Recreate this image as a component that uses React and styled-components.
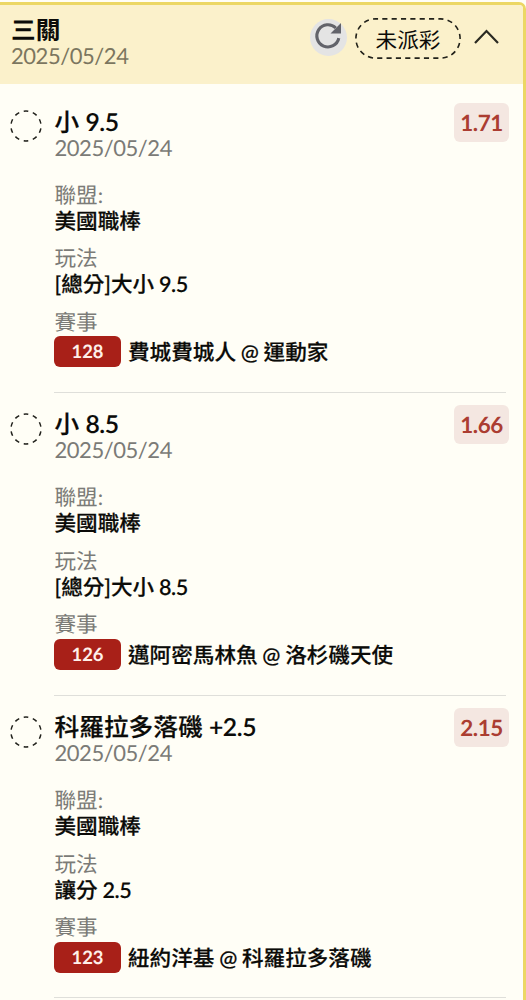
import React from "react";
import styled, { createGlobalStyle } from "styled-components";

const GlobalStyle = createGlobalStyle`
  * { box-sizing: border-box; }
  body { margin: 0; background: #fffef6; overflow: hidden; }
`;

const Page = styled.main`
  width: 526px;
  height: 1000px;
  overflow: hidden;
  padding-top: 2px;
  background: #fffef6;
  color: #0b0b08;
  font-family: Lato, "Noto Sans CJK TC", sans-serif;
  font-size: 21.6px;
  text-rendering: geometricPrecision;
`;

const Ticket = styled.section`
  height: 1010px;
  border: 3px solid #ecd764;
  border-left: 0;
  border-top-right-radius: 7px;
  overflow: hidden;
`;

const Header = styled.header`
  display: flex;
  align-items: flex-start;
  height: 79px;
  padding: 11px 24px 0 11px;
  background: #fbf1cb;
`;

const Heading = styled.div`
  flex: 1;
`;

const Title = styled.h2`
  margin: 0;
  padding-top: 1px;
  font-size: 24.7px;
  line-height: 28px;
  font-weight: ${(p) => p.$weight || 600};
  -webkit-text-stroke: ${(p) => (p.$weight ? "0.2px" : "0")};
  white-space: nowrap;
`;

const DateText = styled.div`
  font-size: 22px;
  letter-spacing: -0.45px;
  line-height: 22px;
  color: ${(p) => p.$color || "#7b7b77"};
`;

const Num = styled.span`
  font-weight: 600;
  letter-spacing: -0.4px;
  -webkit-text-stroke: 0.1px;
`;

const RefreshButton = styled.button`
  width: 37px;
  height: 37px;
  margin: 3px 8px 0 0;
  padding: 0;
  border: 0;
  border-radius: 50%;
  background: #e4e4e4;
`;

const Status = styled.div`
  display: grid;
  width: 106px;
  height: 41px;
  margin: 2px 13px 0 0;
  place-items: center;
  > * { grid-area: 1 / 1; }
`;

const StatusText = styled.span`
  padding-top: 2px;
`;

const Toggle = styled.button`
  width: 25px;
  height: 16px;
  margin-top: 13px;
  padding: 0;
  border: 0;
  background: none;
`;

const Icon = styled.svg`
  display: block;
  overflow: visible;
`;

const List = styled.div`
  padding: 6px 17px 0 10px;
`;

const Bet = styled.article`
  display: flex;
  height: 302.8px;
`;

const Mark = styled.div`
  width: 32px;
  padding-top: 20px;
  margin-right: 12px;
`;

const Body = styled.div`
  flex: 1;
  padding-top: 17.5px;
  padding-left: 0.5px;
  border-bottom: 1.5px solid #dfdfda;
`;

const Top = styled.div`
  display: flex;
  justify-content: space-between;
  height: 52px;
  margin-bottom: 22px;
`;

const Odds = styled.div`
  width: 55px;
  height: 39px;
  margin: -5px -3px 0 0;
  border-radius: 6px;
  background: #f4e7e1;
  color: #ab3d31;
  font-size: 22.4px;
  letter-spacing: -0.4px;
  line-height: 40px;
  font-weight: 700;
  text-align: center;
`;

const Field = styled.div`
  margin-bottom: 10.5px;
  line-height: 26px;
`;

const Label = styled.div`
  color: #7b7b77;
`;

const Value = styled.div`
  line-height: 27px;
  font-weight: 500;
  word-spacing: -0.7px;
  -webkit-text-stroke: 0.2px;
  white-space: nowrap;
`;

const Match = styled(Value)`
  display: flex;
  align-items: flex-start;
  gap: 7px;
  margin-top: 1.5px;
  line-height: 33px;
`;

const Code = styled.span`
  width: 67px;
  height: 31px;
  margin-left: -0.5px;
  border-radius: 6px;
  background: #a82018;
  color: #fff0ea;
  font-size: 18.4px;
  line-height: 31px;
  font-weight: 700;
  text-align: center;
  -webkit-text-stroke: 0;
`;

const bets = [
  { pick: "小", line: "9.5", odds: "1.71", play: "[總分]大小", total: "9.5", code: "128", match: "費城費城人 @ 運動家" },
  { pick: "小", line: "8.5", odds: "1.66", play: "[總分]大小", total: "8.5", code: "126", match: "邁阿密馬林魚 @ 洛杉磯天使" },
  { pick: "科羅拉多落磯", line: "+2.5", odds: "2.15", play: "讓分", total: "2.5", code: "123", match: "紐約洋基 @ 科羅拉多落磯" },
];

function BetRow({ bet }) {
  return (
    <Bet>
      <Mark>
        <Icon width="32" height="32" viewBox="0 0 32 32">
          <circle cx="16" cy="16" r="15" fill="none" stroke="#22221d" strokeWidth="1.5" pathLength="100" strokeDasharray="5 5" strokeDashoffset="7.5" />
        </Icon>
      </Mark>
      <Body>
        <Top>
          <div>
            <Title as="h3" $weight={500}>{bet.pick} <Num>{bet.line}</Num></Title>
            <DateText>2025/05/24</DateText>
          </div>
          <Odds>{bet.odds}</Odds>
        </Top>
        <Field>
          <Label>聯盟:</Label>
          <Value>美國職棒</Value>
        </Field>
        <Field>
          <Label>玩法</Label>
          <Value>{bet.play} <Num>{bet.total}</Num></Value>
        </Field>
        <Field>
          <Label>賽事</Label>
          <Match>
            <Code>{bet.code}</Code>
            <span>{bet.match}</span>
          </Match>
        </Field>
      </Body>
    </Bet>
  );
}

export default function App() {
  return (
    <Page>
      <GlobalStyle />
      <Ticket>
        <Header>
          <Heading>
            <Title>三關</Title>
            <DateText $color="#7b765f">2025/05/24</DateText>
          </Heading>
          <RefreshButton aria-label="重新整理">
            <Icon width="37" height="37" viewBox="0 0 37 37">
              <path d="M28.8 19.2A11.1 11.1 0 1 1 25.8 9" fill="none" stroke="#62636a" strokeWidth="3.1" />
              <path d="M31 4v10.5H20.5z" fill="#62636a" />
            </Icon>
          </RefreshButton>
          <Status>
            <Icon width="106" height="41" viewBox="0 0 106 41">
              <rect x="0.9" y="0.9" width="104.2" height="39.2" rx="19.6" fill="none" stroke="#22221a" strokeWidth="1.6" pathLength="270" strokeDasharray="5.5 4.5" strokeDashoffset="2.75" />
            </Icon>
            <StatusText>未派彩</StatusText>
          </Status>
          <Toggle aria-label="收合">
            <Icon width="25" height="16" viewBox="0 0 25 16">
              <path d="M1 14L12.5 2L24 14" fill="none" stroke="#2a2a22" strokeWidth="2.2" />
            </Icon>
          </Toggle>
        </Header>
        <List>
          {bets.map((bet) => (
            <BetRow key={bet.code} bet={bet} />
          ))}
        </List>
      </Ticket>
    </Page>
  );
}
